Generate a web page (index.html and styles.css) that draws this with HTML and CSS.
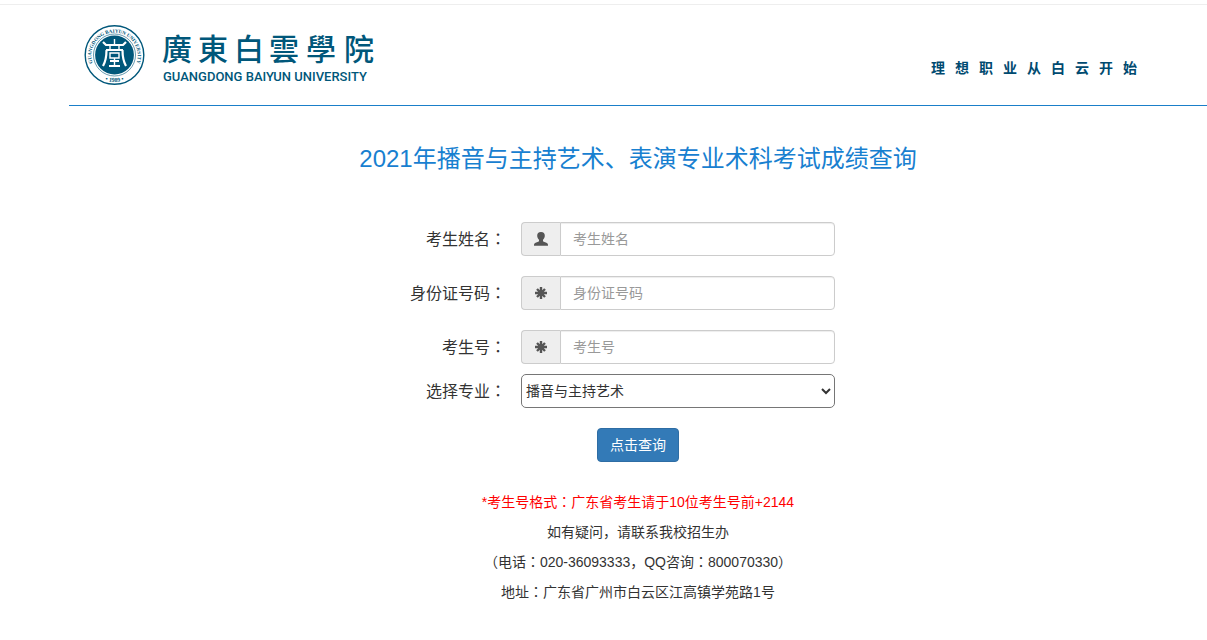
FILE: index.html
```
<!DOCTYPE html>
<html lang="zh-CN">
<head>
    <meta charset="UTF-8">
    <meta name="viewport" content="width=device-width, initial-scale=1.0">
    <title>成绩查询</title>
    <link rel="stylesheet" href="styles.css">
</head>
<body>
    <div class="container">
        <header class="header">
            <svg class="logo" width="310" height="62" viewBox="0 0 310 62" role="img" aria-label="廣東白雲學院">
                <defs>
                    <path id="arc-top" d="M11.4 45 A23.2 23.2 0 1 1 49.6 45"/>
                    <path id="arc-bottom" d="M3.5 31 A27 27 0 0 0 57.5 31"/>
                </defs>
                <!-- seal -->
                <circle cx="30.5" cy="31" r="29.3" fill="#fff" stroke="#00577a" stroke-width="1.4"/>
                <circle cx="30.5" cy="31" r="21" fill="none" stroke="#00577a" stroke-width="0.6"/>
                <circle cx="30.5" cy="31" r="19.4" fill="#00577a"/>
                <text class="seal-text"><textPath href="#arc-top" startOffset="50%">GUANGDONG BAIYUN UNIVERSITY</textPath></text>
                <text class="seal-year"><textPath href="#arc-bottom" startOffset="50%">• 1989 •</textPath></text>
                <g fill="none" stroke="#fff" stroke-width="1.4">
                    <path d="M19 18 L22 21 H39 L42 18" stroke-width="2.2"/>
                    <path d="M30.5 15 V20 M26 22 V25 M35 22 V25"/>
                    <path d="M22 26 H39" stroke-width="2"/>
                    <path d="M22.5 26 Q22.5 36 19 42 M38.5 26 Q38.5 36 42 42" stroke-width="2.2"/>
                    <path d="M26 29 H35 V34 H26 Z M30.5 34 V42"/>
                    <path d="M26 37 H35 M25 42 H36" stroke-width="1.8"/>
                </g>
                <!-- name -->
                <text class="logo-cn" y="36" x="78 114 150 185 222 260">廣東白雲學院</text>
                <text class="logo-en" x="79" y="57">GUANGDONG BAIYUN UNIVERSITY</text>
            </svg>
            <p class="motto">理想职业从白云开始</p>
        </header>

        <h1 class="title">2021年播音与主持艺术、表演专业术科考试成绩查询</h1>

        <form class="form">
            <div class="form-group">
                <label for="name">考生姓名<span lang="zh-TW">：</span></label>
                <div class="input-group">
                    <span class="addon">
                        <svg width="14" height="14" viewBox="0 0 14 14"><path fill="#555" d="M7 0 C9.6 0 10.9 1.6 10.8 3.8 C10.8 5.6 9.9 6.8 9 7.8 V9.3 C9.6 10.2 12.4 10.6 13.5 11.5 C14 12 14 12.8 14 13.8 H0 C0 12.8 0 12 .5 11.5 C1.6 10.6 4.4 10.2 5 9.3 V7.8 C4.1 6.8 3.2 5.6 3.2 3.8 C3.1 1.6 4.4 0 7 0 Z"/></svg>
                    </span>
                    <input type="text" id="name" placeholder="考生姓名">
                </div>
            </div>
            <div class="form-group">
                <label for="idcard">身份证号码<span lang="zh-TW">：</span></label>
                <div class="input-group">
                    <span class="addon">
                        <svg width="14" height="14" viewBox="0 0 14 14"><path stroke="#555" stroke-width="2.4" d="M7 1 V13 M1 7 H13 M3 3 L11 11 M11 3 L3 11"/></svg>
                    </span>
                    <input type="text" id="idcard" placeholder="身份证号码">
                </div>
            </div>
            <div class="form-group">
                <label for="number">考生号<span lang="zh-TW">：</span></label>
                <div class="input-group">
                    <span class="addon">
                        <svg width="14" height="14" viewBox="0 0 14 14"><path stroke="#555" stroke-width="2.4" d="M7 1 V13 M1 7 H13 M3 3 L11 11 M11 3 L3 11"/></svg>
                    </span>
                    <input type="text" id="number" placeholder="考生号">
                </div>
            </div>
            <div class="form-group form-group-select">
                <label for="major">选择专业<span lang="zh-TW">：</span></label>
                <select id="major">
                    <option>播音与主持艺术</option>
                    <option>表演</option>
                </select>
            </div>
            <button type="button" class="btn">点击查询</button>
        </form>

        <div class="tips">
            <p class="red">*考生号格式<span lang="zh-TW">：</span>广东省考生请于10位考生号前+2144</p>
            <p>如有疑问，请联系我校招生办</p>
            <p>（电话<span lang="zh-TW">：</span>020-36093333，QQ咨询<span lang="zh-TW">：</span>800070330）</p>
            <p>地址<span lang="zh-TW">：</span>广东省广州市白云区江高镇学苑路1号</p>
        </div>
    </div>
</body>
</html>
```
FILE: styles.css
```
* {
    box-sizing: border-box;
}

body {
    margin: 0;
    padding-top: 4px;
    font-family: "Liberation Sans", "Noto Sans CJK SC", sans-serif;
    font-size: 14px;
    line-height: 20px;
    color: #333;
    background-color: #fff;
}

.container {
    border-top: 1px solid #eee;
    padding-left: 69px;
}

/* Header */
.header {
    display: flex;
    justify-content: space-between;
    align-items: flex-start;
    padding: 19px 60px 19px 15px;
    border-bottom: 1px solid #1a7fc9;
}

.logo-cn {
    font-family: "Noto Sans CJK TC", sans-serif;
    font-size: 30px;
    font-weight: 500;
    fill: #00577a;
}

.logo-en {
    font-family: Roboto, sans-serif;
    font-size: 13px;
    font-weight: 500;
    fill: #00577a;
}

.seal-text,
.seal-year {
    font-family: "Liberation Serif", serif;
    font-size: 5px;
    font-weight: bold;
    text-anchor: middle;
    fill: #00577a;
}

.seal-year {
    font-size: 6px;
}

.motto {
    margin: 34px 0 0;
    font-weight: bold;
    letter-spacing: 10px;
    color: #004a70;
}

/* Form */
.title {
    margin: 36px 0 46px;
    font-size: 24px;
    font-weight: normal;
    line-height: 34px;
    text-align: center;
    color: #1880d0;
}

.form-group {
    display: flex;
    margin-bottom: 20px;
}

.form-group label {
    width: 38.4%;
    padding-top: 8px;
    font-size: 16px;
    text-align: right;
}

.input-group,
.form-group select {
    width: 27.6%;
    height: 34px;
    margin-left: 15px;
}

.input-group {
    display: flex;
}

.addon {
    display: flex;
    flex: none;
    align-items: center;
    justify-content: center;
    width: 39px;
    border: 1px solid #ccc;
    border-right: 0;
    border-radius: 4px 0 0 4px;
    background-color: #eee;
}

.input-group input {
    flex: 1;
    min-width: 0;
    padding: 6px 12px;
    border: 1px solid #ccc;
    border-radius: 0 4px 4px 0;
    font: inherit;
    color: #555;
    box-shadow: inset 0 1px 1px rgba(0, 0, 0, 0.075);
}

.input-group input::placeholder {
    color: #999;
}

.form-group-select {
    margin-top: -10px;
}

.form-group select {
    border: 1px solid #767676;
    border-radius: 5px;
    font: inherit;
    color: #333;
    background-color: #fff;
}

.btn {
    display: block;
    margin: 0 auto;
    padding: 6px 12px;
    border: 1px solid #2e6da4;
    border-radius: 4px;
    font: inherit;
    color: #fff;
    background-color: #337ab7;
    cursor: pointer;
}

/* Tips */
.tips {
    margin-top: 25px;
    line-height: 30px;
    text-align: center;
}

.tips p {
    margin: 0;
}

.tips .red {
    color: #f00;
}
```
